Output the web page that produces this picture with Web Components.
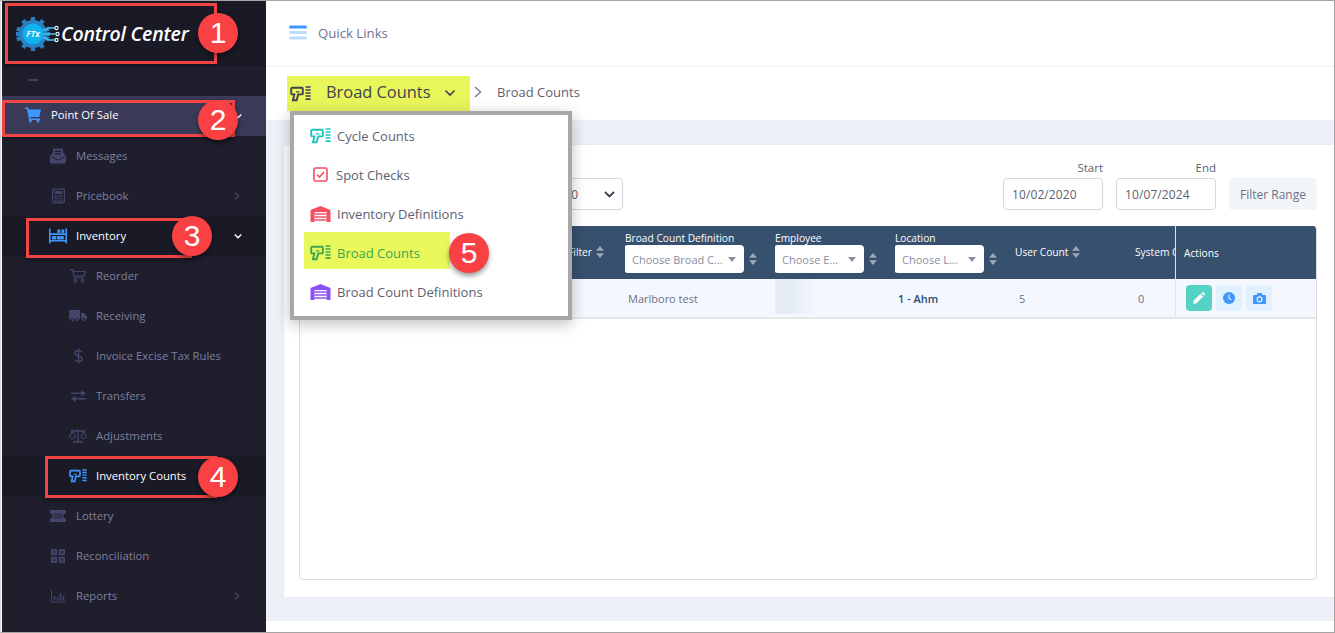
<!DOCTYPE html>
<html lang="en"><head><meta charset="utf-8"><title>Broad Counts</title>
<style>
html,body{margin:0;padding:0;background:#fff;overflow:hidden}
body{width:1335px;height:633px;font-family:"Open Sans",sans-serif}
</style></head><body>
<app-shell>
  <side-nav slot="side">
    <nav-item level="0" icon="cart" label="Point Of Sale" state="open" chev="down"></nav-item>
    <nav-item level="1" icon="mail" label="Messages"></nav-item>
    <nav-item level="1" icon="calc" label="Pricebook" chev="right"></nav-item>
    <nav-item level="1" icon="inv" label="Inventory" state="active" chev="down"></nav-item>
    <nav-item level="2" icon="cart2" label="Reorder"></nav-item>
    <nav-item level="2" icon="truck" label="Receiving"></nav-item>
    <nav-item level="2" icon="dollar" label="Invoice Excise Tax Rules"></nav-item>
    <nav-item level="2" icon="swap" label="Transfers"></nav-item>
    <nav-item level="2" icon="scale" label="Adjustments"></nav-item>
    <nav-item level="2" icon="scan" label="Inventory Counts" state="active"></nav-item>
    <nav-item level="1" icon="ticket" label="Lottery"></nav-item>
    <nav-item level="1" icon="recon" label="Reconciliation"></nav-item>
    <nav-item level="1" icon="chart" label="Reports" chev="right"></nav-item>
  </side-nav>
  <top-bar slot="main"></top-bar>
  <page-bar slot="main"></page-bar>
  <content-card slot="main">
    <filter-row></filter-row>
    <data-table></data-table>
  </content-card>
  <page-foot slot="main"></page-foot>
  <drop-menu slot="over"></drop-menu>
  <call-out slot="over" n="1" box="5,3,212,61" dot="198,13"></call-out>
  <call-out slot="over" n="2" box="2,100,233,37" dot="198,100"></call-out>
  <call-out slot="over" n="3" box="26,218,166,40" dot="172,216"></call-out>
  <call-out slot="over" n="4" box="45,456,172,42" dot="198,457"></call-out>
  <call-out slot="over" n="5" dot="449,233"></call-out>
</app-shell>
<script>
const SCAN=c=>`<svg viewBox="0 0 21 16" width="100%" height="100%"><path d="M2.2 1.8h9.6a1 1 0 0 1 1 1v4.6a1 1 0 0 1-1 1H8.2L6.6 14.2H2.9L4.4 8.4H2.2a1 1 0 0 1-1-1V2.8a1 1 0 0 1 1-1z" fill="none" stroke="${c}" stroke-width="1.9"/><path d="M6 5.9h3.4" stroke="${c}" stroke-width="1.2"/><path d="M15.6 1h5M15.6 4h5M15.6 7h5M15.6 10h5M15.6 13.2h5" stroke="${c}" stroke-width="1.7"/></svg>`;
const HOUSE=c=>`<svg viewBox="0 0 20 16" width="100%" height="100%"><path d="M0 4 10 0l10 4v12H0z" fill="${c}"/><path d="M4 6h12v10H4z" fill="#fff"/><path d="M4 8h12M4 11h12M4 14h12" stroke="${c}" stroke-width="1.3"/></svg>`;
const M='#45456b';
const ICONS={
 cart:`<svg viewBox="0 0 16 15" width="100%" height="100%"><path d="M0 0h3.2l.5 2H16l-1.800 7.500H5.300l.3 1.400H15v1.500H4.200L1.900 1.500H0z" fill="#3e97ff"/><circle cx="5.400" cy="13.500" r="1.500" fill="#3e97ff"/><circle cx="13" cy="13.500" r="1.500" fill="#3e97ff"/></svg>`,
 mail:`<svg viewBox="0 0 16 15" width="100%" height="100%"><path d="M0 6.500 3 4.400V1.400A1.400 1.400 0 0 1 4.400 0h7.200A1.400 1.400 0 0 1 13 1.400v3L16 6.500v7.100A1.400 1.400 0 0 1 14.600 15H1.400A1.400 1.400 0 0 1 0 13.600z" fill="${M}"/><path d="M5 2.800h6M5 5.200h6" stroke="#1e1e2d" stroke-width="1.200"/><path d="M.6 7.400 8 11.800l7.400-4.400" fill="none" stroke="#1e1e2d" stroke-width="1"/></svg>`,
 calc:`<svg viewBox="0 0 13 15" width="100%" height="100%"><rect x=".6" y=".6" width="11.800" height="13.800" rx="1.400" fill="none" stroke="${M}" stroke-width="1.300"/><rect x="2.600" y="2.600" width="7.800" height="2.800" fill="${M}"/><path d="M2.600 7.500h2M5.500 7.500h2M8.400 7.500h2M2.600 10h2M5.500 10h2M8.400 10h2M2.600 12.400h2M5.500 12.400h2M8.400 12.400h2" stroke="${M}" stroke-width="1.500"/></svg>`,
 inv:`<svg viewBox="0 0 18 15" width="100%" height="100%"><path d="M.8 0v15M17.200 0v15" stroke="#3e97ff" stroke-width="1.600"/><path d="M.8 5.600h16.400M.8 12.200h16.400" stroke="#3e97ff" stroke-width="1.600"/><rect x="3" y="7.600" width="4.200" height="3.400" fill="#3e97ff"/><rect x="8" y="7.600" width="6.800" height="3.400" fill="#3e97ff"/><rect x="8.400" y="1" width="2.800" height="3.400" fill="#3e97ff"/><rect x="12.400" y="1" width="2.800" height="3.400" fill="#3e97ff"/></svg>`,
 cart2:`<svg viewBox="0 0 16 14" width="100%" height="100%"><path d="M0 .7h2.500l2 8.300h9.200M3 2.500h12.300l-1.500 4.700H4.200" fill="none" stroke="${M}" stroke-width="1.200"/><circle cx="5.400" cy="12" r="1.400" fill="none" stroke="${M}" stroke-width="1.100"/><circle cx="12.600" cy="12" r="1.400" fill="none" stroke="${M}" stroke-width="1.100"/></svg>`,
 truck:`<svg viewBox="0 0 18 12" width="100%" height="100%"><path d="M0 1a1 1 0 0 1 1-1h10v9.600H0zM12 3h3l3 3.200v3.400h-6z" fill="${M}"/><circle cx="3.600" cy="10" r="1.800" fill="${M}" stroke="#1e1e2d" stroke-width=".8"/><circle cx="8" cy="10" r="1.800" fill="${M}" stroke="#1e1e2d" stroke-width=".8"/><circle cx="14.600" cy="10" r="1.800" fill="${M}" stroke="#1e1e2d" stroke-width=".8"/></svg>`,
 dollar:`<svg viewBox="0 0 9 15" width="100%" height="100%"><path d="M8 3.400C7.400 2.400 6 2 4.500 2 2.500 2 1 3 1 4.600S2.500 6.800 4.500 7.400 8 8.800 8 10.400 6.500 13 4.500 13C3 13 1.600 12.600 1 11.600M4.500 0v15" fill="none" stroke="${M}" stroke-width="1.400"/></svg>`,
 swap:`<svg viewBox="0 0 15 12" width="100%" height="100%"><path d="M0 3.200h12.500M2.500 8.800H15" stroke="${M}" stroke-width="1.600"/><path d="M10.500 0 15 3.200l-4.500 3zM4.500 5.800 0 8.800l4.500 3.200z" fill="${M}"/></svg>`,
 scale:`<svg viewBox="0 0 18 14" width="100%" height="100%"><path d="M9 0v13M4 13h10M2 2h14" stroke="${M}" stroke-width="1.300"/><path d="M3.400 2 .8 7.600a2.800 2.600 0 0 0 5.400 0zM14.600 2l-2.600 5.600a2.800 2.600 0 0 0 5.400 0z" fill="none" stroke="${M}" stroke-width="1.100"/></svg>`,
 scan:SCAN('#3e97ff'),
 ticket:`<svg viewBox="0 0 16 12" width="100%" height="100%"><path d="M1 0h14a1 1 0 0 1 1 1v2.400a2.600 2.600 0 0 0 0 5.200V11a1 1 0 0 1-1 1H1a1 1 0 0 1-1-1V8.600a2.600 2.600 0 0 0 0-5.200V1a1 1 0 0 1 1-1z" fill="${M}"/><rect x="3.600" y="3" width="8.800" height="6" fill="#1e1e2d" opacity=".45"/></svg>`,
 recon:`<svg viewBox="0 0 14 14" width="100%" height="100%"><rect width="6.200" height="6.200" rx=".8" fill="${M}"/><rect x="7.800" width="6.200" height="6.200" rx=".8" fill="${M}"/><rect y="7.800" width="6.200" height="6.200" rx=".8" fill="${M}"/><rect x="7.800" y="7.800" width="6.200" height="6.200" rx=".8" fill="${M}"/><path d="M1.400 3.100h3.400M9.200 3.100h3.400M10.900 1.400v3.400M9.200 9.900h3.400M9.200 12h3.400M1.800 9.400l2.600 2.600M4.400 9.400 1.800 12" stroke="#1e1e2d" stroke-width=".9"/></svg>`,
 chart:`<svg viewBox="0 0 15 13" width="100%" height="100%"><path d="M.5 0v12.500H15" fill="none" stroke="${M}" stroke-width="1"/><path d="M3.500 6.500v4.500M6.500 8v3M9.500 3.500v7.500M12.500 6v5" stroke="${M}" stroke-width="1.500"/></svg>`,
 pencil:`<svg viewBox="0 0 12 12" width="12" height="12"><path d="M0 12l.8-3.400 6.800-6.800 2.600 2.600-6.800 6.800zM8.400 1 9.200.2a.8.8 0 0 1 1.100 0l1.500 1.500a.8.8 0 0 1 0 1.100l-.8.8z" fill="#fff"/></svg>`,
 clock:`<svg viewBox="0 0 12 12" width="12" height="12"><circle cx="6" cy="6" r="6" fill="#3e97ff"/><path d="M6 2.600v3.600l2.400 1.600" fill="none" stroke="#e8f2ff" stroke-width="1.200"/></svg>`,
 camera:`<svg viewBox="0 0 13 11" width="13" height="11"><path d="M1.200 2h2.400L4.500 0h4l.9 2h2.400A1.200 1.200 0 0 1 13 3.200v6.600a1.200 1.200 0 0 1-1.200 1.200H1.200A1.200 1.200 0 0 1 0 9.800V3.200A1.200 1.200 0 0 1 1.200 2z" fill="#3e97ff"/><circle cx="6.500" cy="6.300" r="2.500" fill="none" stroke="#e8f2ff" stroke-width="1.200"/></svg>`,
 sort:`<svg viewBox="0 0 8 12" width="100%" height="100%"><path d="M4 0 8 4.800H0zM4 12 0 7.200h8z" fill="#9aa7b6"/></svg>`
};
function def(name,css,html){
  customElements.define(name,class extends HTMLElement{
    connectedCallback(){
      if(this.shadowRoot)return;
      const r=this.attachShadow({mode:'open'});
      const h=typeof html==='function'?html(this):html;
      r.innerHTML=`<style>${css}</style>${h}`;
    }
  });
}
def('app-shell',`
:host{display:block;width:1333px;height:631px;border-top:1px solid #a4a4a4;border-bottom:1px solid #a4a4a4;border-right:1px solid #a4a4a4;border-left:1px solid #d8d8d8;position:relative;overflow:hidden}
.w{display:flex;height:100%;width:100%}
.s{width:265px;flex:none;display:block}
.m{flex:1;min-width:0;display:flex;flex-direction:column;background:#eef0f8}
`,`<div class="w"><div class="s"><slot name="side"></slot></div><div class="m"><slot name="main"></slot></div></div><slot name="over"></slot>`);
def('side-nav',`
:host{display:flex;flex-direction:column;height:631px;background:#1e1e2d;color:#fff;margin-left:1px;width:264px}
.logo{height:65px;background:#1a1a27;display:flex;align-items:center;padding-left:11px}
.logo svg{width:48px;height:40px;flex:none}
.logo b{font:italic 600 19.500px "Open Sans",sans-serif;color:#fff;letter-spacing:-.2px;margin-top:-1px}
.tog{height:30px;display:flex;align-items:center;padding-left:26px}
.tog i{display:block;width:10px;height:1.500px;background:#3f3f5c;margin-top:-2px}
`,`<div class="logo"><svg viewBox="0 0 48 40">
<circle cx="20" cy="20" r="14" fill="#2a7fc0"/><g stroke="#2a7fc0" stroke-width="4.200"><path d="M20 3v34M3 20h34M10 6.200l20 27.600M30 6.200 10 33.800M3.800 14.700l32.400 10.600M36.200 14.700 3.800 25.300"/></g>
<circle cx="20" cy="20" r="10.500" fill="#10b2ee"/>
<path d="M30 16h3l2-2h7M30 20h12M30 24h3l2 2h7" fill="none" stroke="#4cc4f0" stroke-width="1.500"/><g fill="#1a1a27" stroke="#dff2fb" stroke-width="1.200"><circle cx="43.500" cy="14" r="1.600"/><circle cx="44.500" cy="20" r="1.600"/><circle cx="43.500" cy="26" r="1.600"/></g>
<text x="20" y="23" text-anchor="middle" font-family="Open Sans" font-style="italic" font-weight="700" font-size="8.500" fill="#e8f8ff">FTx</text></svg><b>Control Center</b></div>
<div class="tog"><i></i></div><slot></slot>`);
def('nav-item',`
:host{display:flex;align-items:center;height:40px;flex:none;position:relative;font:400 11.300px "Open Sans",sans-serif;color:#7f7f9f}
:host([state=open]){background:#3a3a58;color:#fff;font-weight:500}
:host([state=active]){background:#1a1a27;color:#fff;font-weight:500}
.ic{position:absolute;top:50%;transform:translateY(-50%);display:flex;align-items:center;justify-content:center;height:18px}
.t{position:absolute;white-space:nowrap;top:50%;transform:translateY(-52%)}
:host([state=open]) .t,:host([state=open]) .ic{margin-top:-1px}
.c{position:absolute;top:50%;transform:translateY(-50%);width:8px;height:8px;display:block}
`,el=>{
 const lv=+el.getAttribute('level');
 const tx=[49,74,94][lv],ix=[22,47,67][lv];
 const nm=el.getAttribute('icon');
 const ws={cart:16,mail:16,calc:13,inv:18,cart2:16,truck:18,dollar:9,swap:15,scale:18,scan:18,ticket:16,recon:14,chart:15};
 const ch=el.getAttribute('chev');
 const chev=ch==='down'?`<svg class="c" style="left:232px" viewBox="0 0 8 8"><path d="M.8 2.600 4 5.800l3.200-3.200" fill="none" stroke="#fff" stroke-width="1.400"/></svg>`:ch==='right'?`<svg class="c" style="left:231px" viewBox="0 0 8 8"><path d="M2 .6 5.800 4 2 7.400" fill="none" stroke="#4b4b6b" stroke-width="1.200"/></svg>`:'';
 return `<span class="ic" style="left:${ix+(18-ws[nm])/2}px;width:${ws[nm]}px">${ICONS[nm]}</span><span class="t" style="left:${tx}px">${el.getAttribute('label')}</span>${chev}`;
});
def('top-bar',`
:host{display:flex;align-items:center;height:63px;padding-bottom:2px;background:#fff;border-bottom:1px solid #eef0f8;padding-left:23px;gap:11px;flex:none;font:400 13.200px "Open Sans",sans-serif;color:#6f7390}
svg{width:18px;height:16px}
`,`<svg viewBox="0 0 18 16"><path d="M1.500 2h15" stroke="#3e97ff" stroke-width="3" stroke-linecap="round"/><path d="M1.500 7.500h15M1.500 13h15" stroke="#bcdcff" stroke-width="3" stroke-linecap="round"/></svg><span>Quick Links</span>`);
def('page-bar',`
:host{display:flex;align-items:center;height:53px;background:#fff;flex:none;padding-left:21px;font:400 13px "Open Sans",sans-serif;color:#5d5f73}
.h{display:flex;align-items:center;height:35px;width:183px;background:#e8f65a;font-size:16.400px;color:#3f4254;padding:0 0 3px 3px;box-sizing:border-box;margin-top:-1px}
.ic{width:21px;height:16px;display:block;margin-right:15px}
.d{width:12px;height:8px;margin:3px 0 0 14px}
.s{width:8px;height:12px;margin:-4px 15px 0 4px}
.b{margin-top:-4px}
`,`<div class="h"><span class="ic">${SCAN('#3f4254')}</span><span>Broad Counts</span><svg class="d" viewBox="0 0 12 8"><path d="M1.500 1.500 6 6l4.500-4.500" fill="none" stroke="#3f4254" stroke-width="1.600"/></svg></div><svg class="s" viewBox="0 0 8 12"><path d="M1 1l5.500 5L1 11" fill="none" stroke="#7e8299" stroke-width="1.500"/></svg><span class="b">Broad Counts</span>`);
def('content-card',`
:host{display:block;height:452px;background:#fff;margin:25px 0 0 18px;box-sizing:border-box;padding:0 15px;border-radius:4px 0 0 0;box-shadow:0 0 2px rgba(0,0,0,.08);flex:none}
`,`<slot></slot>`);
def('page-foot',`:host{display:block;flex:1;background:#fff;margin-top:24px}`,``);
def('filter-row',`
:host{display:flex;align-items:flex-start;height:81px;font:400 12px "Open Sans",sans-serif;color:#5d5f73;box-sizing:border-box;padding:33px 0 0 181px}
.sel{width:143px;height:32px;border:1px solid #d5d7df;border-radius:4px;box-sizing:border-box;display:flex;align-items:center;justify-content:flex-end;padding-right:7px;gap:26px;margin-right:380px}
.f{display:flex;flex-direction:column;align-items:flex-end;margin-top:-19px;margin-right:13px}
.f label{line-height:17px;padding-bottom:2px;font-size:11.500px}
.f span{display:flex;align-items:center;width:100px;height:32px;border:1px solid #d5d7df;border-radius:4px;box-sizing:border-box;padding-left:8px;letter-spacing:.1px}
button{font:inherit;height:32px;width:88px;border:0;border-radius:4px;background:#f3f6f9;color:#6c7086;padding:0}
`,`<div class="sel"><span>30</span><svg width="11" height="7" viewBox="0 0 11 7"><path d="M1 1l4.500 4.500L10 1" fill="none" stroke="#3f4254" stroke-width="1.800"/></svg></div><div class="f"><label>Start</label><span>10/02/2020</span></div><div class="f"><label>End</label><span>10/07/2024</span></div><button>Filter Range</button>`);
def('data-table',`
:host{display:block;height:354px;width:1018px;border:1px solid #dcdde2;border-top:0;border-radius:4px;box-sizing:border-box;overflow:hidden;font:400 11px "Open Sans",sans-serif;color:#6c7086;background:#fff}
.r{display:grid;grid-template-columns:325px 150px 120px 120px 120px 40px 141px;align-items:center}
.h{height:53px;background:#37506d;color:#fff;font-weight:500;font-size:10.200px}
.b{height:40px;box-sizing:border-box;background:#f4f8fe;border-bottom:2px solid #e4e6ea}
.c{white-space:nowrap;overflow:hidden;height:100%;display:flex;flex-direction:column;justify-content:center;box-sizing:border-box;position:relative}
.l{display:flex;align-items:center;gap:4px;line-height:14px;margin-top:-1px}
.ctl{display:flex;align-items:center;gap:5px;margin-left:-1px}
.dd{display:flex;align-items:center;justify-content:space-between;height:28px;background:#fff;border-radius:4px;color:#8a8d9e;font-weight:400;font-size:11px;padding:0 8px;box-sizing:border-box}
.dd i{border:4px solid transparent;border-top:5px solid #8a8d9e;border-bottom:0;display:block;flex:none}
.so{width:8px;height:12px;display:block;flex:none}
.a{border-left:1px solid #dfe3ea;padding-left:8px;flex-direction:row;justify-content:flex-start;align-items:center}
.btns{display:flex;gap:4px;margin-left:2px}
.btns span{display:flex;align-items:center;justify-content:center;width:26px;height:26px;border-radius:4px;background:#e1f0ff}
.btns span:first-child{background:#54d2c5}
.btns svg{display:block}
.blur{position:absolute;left:0;top:0;bottom:3px;width:42px;background:linear-gradient(90deg,#e6ecf6 40%,#f4f8fe)}
`,()=>{
 const so=`<span class="so">${ICONS.sort}</span>`;
 const dd=(t,w)=>`<div class="ctl"><div class="dd" style="width:${w}px"><span>${t}</span><i></i></div>${so}</div>`;
 return `<div class="r h">
  <div class="c" style="align-items:flex-end;padding-right:21px"><div class="l">Filter ${so}</div></div>
  <div class="c"><div class="l">Broad Count Definition</div>${dd('Choose Broad C...',120)}</div>
  <div class="c"><div class="l">Employee</div>${dd('Choose E...',90)}</div>
  <div class="c"><div class="l">Location</div>${dd('Choose L...',90)}</div>
  <div class="c"><div class="l">User Count ${so}</div></div>
  <div class="c"><div class="l">System C</div></div>
  <div class="c a"><span>Actions</span></div>
 </div>
 <div class="r b">
  <div class="c"></div>
  <div class="c"><span style="padding-left:3px">Marlboro test</span></div>
  <div class="c"><span class="blur"></span></div>
  <div class="c"><span style="padding-left:3px;color:#2c4a6e;font-weight:600">1 - Ahm</span></div>
  <div class="c"><span style="padding-left:4px">5</span></div>
  <div class="c"><span style="padding-left:3px">0</span></div>
  <div class="c a"><div class="btns"><span>${ICONS.pencil}</span><span>${ICONS.clock}</span><span>${ICONS.camera}</span></div></div>
 </div>`;
});
def('drop-menu',`
:host{position:absolute;left:289px;top:110px;width:282px;height:209px;box-sizing:border-box;border:4px solid #a8a8a8;background:#fff;box-shadow:0 4px 14px rgba(0,0,0,.25);display:flex;flex-direction:column;padding:1px 0 0 0;font:400 13px "Open Sans",sans-serif;color:#5d6072}
.i{display:flex;align-items:center;height:39px;flex:none;padding-left:16px;position:relative}
.i svg{display:block}
.ic{width:21px;height:16px;margin-right:6px;display:flex;align-items:center;justify-content:flex-start;flex:none}
.y{position:absolute;left:10px;top:-1px;width:146px;height:37px;background:#e9f85a}
.g{color:#3aa655}
.i>span{position:relative}
`,()=>`
<div class="i"><span class="ic">${SCAN('#1bc5bd')}</span><span>Cycle Counts</span></div>
<div class="i"><span class="ic"><svg width="21" height="15" viewBox="0 0 21 15"><rect x="4" y="1" width="13" height="13" rx="1.500" fill="none" stroke="#f64e60" stroke-width="1.600"/><path d="M7 7.500l2.500 2.500 4.500-5" fill="none" stroke="#f64e60" stroke-width="1.600"/></svg></span><span style="margin-left:-1px">Spot Checks</span></div>
<div class="i"><span class="ic">${HOUSE('#f64e60')}</span><span>Inventory Definitions</span></div>
<div class="i"><div class="y"></div><span class="ic">${SCAN('#3aa655')}</span><span class="g">Broad Counts</span></div>
<div class="i"><span class="ic">${HOUSE('#8950fc')}</span><span>Broad Count Definitions</span></div>`);
def('call-out',`
:host{display:contents}
.b{position:absolute;border:3px solid #f04545;box-sizing:border-box;box-shadow:0 2px 4px rgba(0,0,0,.3)}
.d{position:absolute;width:40px;height:40px;border-radius:50%;background:#f94144;color:#fff;font:400 30px "Liberation Sans",sans-serif;display:flex;align-items:center;justify-content:center;box-shadow:0 3px 5px rgba(0,0,0,.4)}
`,el=>{
 const b=el.getAttribute('box'),d=el.getAttribute('dot').split(',');
 let s='';
 if(b){const [x,y,w,h]=b.split(',');s=`<div class="b" style="left:${x-1}px;top:${y-1}px;width:${w}px;height:${h}px"></div>`;}
 return s+`<div class="d" style="left:${d[0]-1}px;top:${d[1]-1}px">${el.getAttribute('n')}</div>`;
});
</script>
</body></html>
